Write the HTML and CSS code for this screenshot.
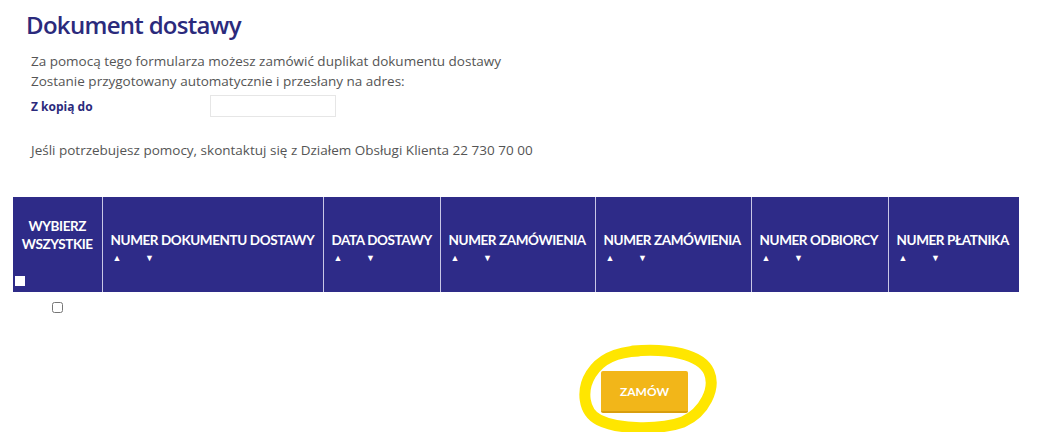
FILE: index.html
```html
<!DOCTYPE html>
<html lang="pl">
<head>
  <meta charset="UTF-8">
  <title>Dokument dostawy</title>
  <link rel="stylesheet" href="styles.css">
</head>
<body>
  <div class="page">
    <h1 class="title">Dokument dostawy</h1>
    <div class="intro">
      <p>Za pomocą tego formularza możesz zamówić duplikat dokumentu dostawy</p>
      <p>Zostanie przygotowany automatycznie i przesłany na adres:</p>
    </div>
    <div class="copy-row">
      <label for="copyTo">Z kopią do</label>
      <input type="text" id="copyTo">
    </div>
    <p class="help">Jeśli potrzebujesz pomocy, skontaktuj się z Działem Obsługi Klienta 22 730 70 00</p>

    <table class="docs">
      <thead>
        <tr>
          <th class="col-select">
            <div class="select-all">WYBIERZ<br>WSZYSTKIE</div>
            <span class="check-white"></span>
          </th>
          <th class="col-doc"><div class="head">NUMER DOKUMENTU DOSTAWY</div><div class="sort"><span>&#9650;</span><span>&#9660;</span></div></th>
          <th class="col-date"><div class="head">DATA DOSTAWY</div><div class="sort"><span>&#9650;</span><span>&#9660;</span></div></th>
          <th class="col-order"><div class="head">NUMER ZAMÓWIENIA</div><div class="sort"><span>&#9650;</span><span>&#9660;</span></div></th>
          <th class="col-order2"><div class="head">NUMER ZAMÓWIENIA</div><div class="sort"><span>&#9650;</span><span>&#9660;</span></div></th>
          <th class="col-recv"><div class="head">NUMER ODBIORCY</div><div class="sort"><span>&#9650;</span><span>&#9660;</span></div></th>
          <th class="col-payer"><div class="head">NUMER PŁATNIKA</div><div class="sort"><span>&#9650;</span><span>&#9660;</span></div></th>
        </tr>
      </thead>
      <tbody>
        <tr>
          <td class="cell-check"><input type="checkbox"></td>
          <td></td><td></td><td></td><td></td><td></td><td></td>
        </tr>
      </tbody>
    </table>

    <div class="actions">
      <button class="order-btn">ZAMÓW</button>
      <!-- yellow hand-drawn marker around the button -->
      <svg class="marker" width="150" height="96" viewBox="0 0 150 96">
        <path d="M60 9 C95 6 128 12 136 30 C143 46 132 70 110 80 C88 88 46 88 26 78 C10 70 8 48 18 32 C28 16 44 10 66 9"
              fill="none" stroke="#ffe600" stroke-width="11" stroke-linecap="round"/>
      </svg>
    </div>
  </div>
</body>
</html>
```

FILE: styles.css
```css
* {
  margin: 0;
  padding: 0;
  box-sizing: border-box;
}

body {
  font-family: 'Open Sans', 'Noto Sans', sans-serif;
  background-color: #fff;
  color: #555;
  overflow: hidden;
}

.page {
  padding: 8px 0 0 13px;
}

.title {
  font-size: 24px;
  font-weight: 600;
  color: #2b2a7c;
  margin-left: 13px;
  line-height: 34px;
  letter-spacing: -0.7px;
}

.intro {
  margin: 9px 0 0 18px;
  font-size: 13.5px;
  line-height: 20px;
}

.copy-row {
  display: flex;
  align-items: center;
  margin: 4px 0 0 18px;
  height: 22px;
}

.copy-row label {
  width: 179px;
  font-size: 12px;
  font-weight: 700;
  color: #2b2a7c;
}

.copy-row input {
  width: 126px;
  height: 22px;
  border: 1px solid #e6e6e6;
  outline: none;
}

.help {
  margin: 23px 0 0 18px;
  font-size: 13.5px;
  line-height: 20px;
}

.docs {
  margin-top: 37px;
  width: 1006px;
  border-collapse: collapse;
  table-layout: fixed;
}

.docs th {
  background-color: #2e2b88;
  color: #fff;
  font-family: 'Lato', sans-serif;
  font-weight: 700;
  font-size: 13.5px;
  text-align: left;
  vertical-align: middle;
  border-left: 1px solid #c9c7e6;
  padding: 6px 0 0 8px;
  height: 95px;
  white-space: nowrap;
  letter-spacing: -0.4px;
}

.docs th:first-child {
  border-left: none;
}

.col-select { width: 89px; position: relative; }
.col-doc { width: 221px; }
.col-date { width: 117px; }
.col-order { width: 155px; }
.col-order2 { width: 156px; }
.col-recv { width: 137px; }
.col-payer { width: 131px; }

.docs th.col-select {
  padding: 0;
  text-align: center;
  vertical-align: top;
}

.select-all {
  margin-top: 20px;
  line-height: 18px;
}

.check-white {
  position: absolute;
  left: 2px;
  bottom: 6px;
  width: 10px;
  height: 10px;
  background-color: #fff;
}

.sort {
  display: flex;
  gap: 24px;
  font-size: 9px;
  margin: 4px 0 0 2px;
  line-height: 12px;
}

.docs td {
  height: 29px;
}

.cell-check {
  text-align: center;
}

.cell-check input {
  width: 11px;
  height: 11px;
  margin-top: 4px;
}

.actions {
  position: relative;
  margin: 21px 0 0 588px;
  height: 90px;
}

.order-btn {
  margin-top: 29px;
  width: 87px;
  height: 42px;
  background-color: #f2b619;
  border: none;
  border-bottom: 2px solid #d89e0e;
  color: #fff;
  font-family: 'Lato', sans-serif;
  font-weight: 700;
  font-size: 12px;
  border-radius: 2px;
}

.marker {
  position: absolute;
  left: -28px;
  top: 0;
}
```
